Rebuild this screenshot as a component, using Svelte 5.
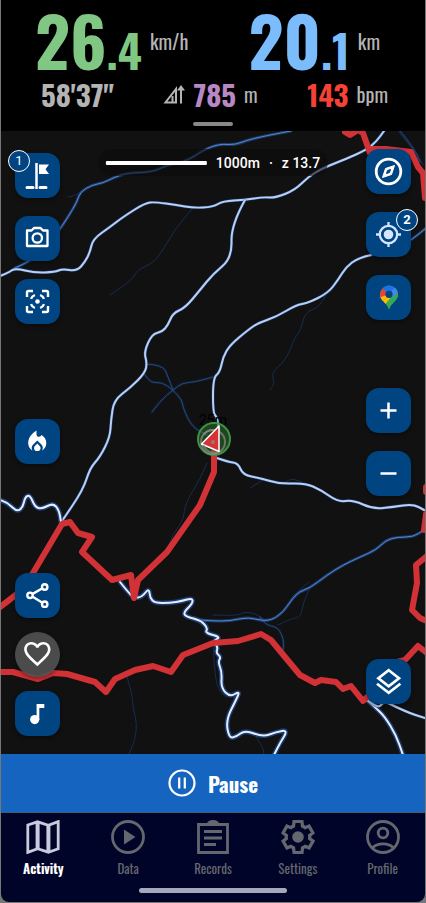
<script lang="ts">
  type River = { kind: string; points: string };

  let activeTab: string = "Activity";
  let paused: boolean = false;
  let liked: boolean = false;

  const tabs = ["Activity", "Data", "Records", "Settings", "Profile"];

  // Heatmap lines, from faint trails to busy roads
  const rivers: River[] = [
    { kind: "faint", points: "193,208 178,225 167,243 155,262 137,270 132,280 110,295" },
    { kind: "faint", points: "326,295 320,307 305,312 301,330 295,337 286,360 271,373 275,383 270,390" },
    { kind: "faint", points: "127,677 132,693 133,708 137,723 135,740 129,754" },
    { kind: "faint", points: "207,463 200,480 185,503 184,520 172,535 167,552" },
    { kind: "faint", points: "278,625 290,619 301,617 303,603 310,588" },
    { kind: "faint", points: "213,615 238,616 243,612 255,613 268,622" },
    { kind: "faint", points: "256,737 263,747 264,755" },
    { kind: "faint", points: "250,488 263,480" },
    { kind: "faint", points: "284,483 290,478 302,482" },
    { kind: "faint", points: "68,197 75,196 80,192" },
    { kind: "faint", points: "398,131 409,145 417,153 423,165" },
    { kind: "faint", points: "213,640 214,668 218,690 226,697" },
    { kind: "faint", points: "294,598 301,588 309,582" },
    { kind: "dim", points: "147,364 163,365 168,377 173,390" },
    { kind: "dim", points: "145,375 150,383 162,382 173,390 182,400 183,408 192,427 207,435" },
    { kind: "dim", points: "152,412 160,401 173,390 182,383 195,382 213,377" },
    { kind: "dim", points: "260,617 265,625 278,627 284,640 283,650" },
    { kind: "dim", points: "400,131 414,148 420,162" },
    { kind: "mid", points: "291,131 253,138 235,145 223,144 213,146 202,151 187,161 167,165 153,172 127,173 115,177 103,183 92,185 80,192 77,202 68,217 60,229 45,250 28,262 15,268" },
    { kind: "mid", points: "200,620 213,621 230,621 248,617 268,622 283,613 296,593 310,588 327,575 343,565 360,557 376,550 386,540 398,537 413,537 424,530" },
    { kind: "mid", points: "426,228 411,241 390,251 371,255" },
    { kind: "bright", points: "0,276 8,273 15,268 35,273 55,272 62,269 77,271 85,262 90,252 93,239 110,227 123,217 145,203 155,202 177,205 193,208 213,207 223,201 245,200 263,197 275,198 295,190 308,177 323,168 346,159 366,150 376,142 384,131" },
    { kind: "bright", points: "245,200 231,225 232,258 213,274 200,290 185,308 173,313 168,325 162,332 152,334 144,352 147,363 145,373 130,388 114,400 111,420 110,437 100,457 90,468 83,490 62,521" },
    { kind: "bright", points: "371,255 358,258 346,267 338,280 328,293 308,303 296,305 276,317 258,323 248,330 230,345 223,357 220,372 213,378 213,413 217,417 219,430" },
    { kind: "bright", points: "214,457 228,462 238,463 243,475 260,478 280,484 305,483 321,490 338,502 353,500 373,509 393,507 413,504 424,510" },
    { kind: "bright", points: "388,703 406,712 425,718" },
    { kind: "busy", points: "0,500 7,502 17,512 23,507 25,497 30,495 35,507 42,509 53,503 59,510 61,522" },
    { kind: "busy", points: "120,582 128,592 134,598 142,597 149,588 150,598 155,603 170,603 182,601 192,598 193,603 183,613 187,617 200,620 208,628 205,633 221,637 213,641 218,647 216,653 221,657 218,662 222,672 221,688 230,697 240,691 236,700 226,720 229,738 236,737 245,730 263,737 276,732 288,730 280,743 274,755" },
    { kind: "busy", points: "366,699 376,708 385,717 396,735 403,755" },
    { kind: "bright", points: "370,702 378,708 383,703" },
  ];

  // Route segments
  const routes: string[] = [
    "214,452 214,472 200,505 167,552 138,580 134,598 131,575 112,580 82,552 92,537 78,533 70,522 62,524 33,573 17,594 0,607",
    "0,672 13,672 38,679 53,673 67,674 95,682 106,692 115,679 135,670 153,666 171,672 183,655 213,643 238,641 261,634 271,640 285,657 300,675 315,683 321,680 336,682 343,689 351,686 363,701 375,690",
    "385,665 405,660 418,646 427,653",
    "427,556 416,565 417,583 412,610 420,618 427,621",
    "426,487 426,492",
    "426,514 424,530",
    "345,132 350,135 358,130 363,133 370,153",
    "372,149 386,149 411,152 418,167 423,173 425,198",
  ];

  // Rounds off the corners of a point list
  function smooth(points: string): string {
    const p = points.split(" ").map((s) => s.split(",").map(Number));
    let d = `M${p[0][0]} ${p[0][1]}`;
    for (let i = 1; i < p.length - 1; i++) {
      const mx = (p[i][0] + p[i + 1][0]) / 2;
      const my = (p[i][1] + p[i + 1][1]) / 2;
      d += `Q${p[i][0]} ${p[i][1]} ${mx} ${my}`;
    }
    const last = p[p.length - 1];
    return d + `L${last[0]} ${last[1]}`;
  }
</script>

<div class="app">
  <header class="stats">
    <div class="row main-row">
      <div class="stat speed">
        <span class="big">26<span class="decimal">.4</span></span>
        <span class="unit">km/h</span>
      </div>
      <div class="stat distance">
        <span class="big">20<span class="decimal">.1</span></span>
        <span class="unit">km</span>
      </div>
    </div>
    <div class="row sub-row">
      <div class="small time">58'37"</div>
      <div class="small climb">
        <svg class="climb-icon" viewBox="0 0 22 20" aria-hidden="true">
          <path d="M2.500 18.500H13V5Z" fill="none" stroke="currentColor" stroke-width="2" />
          <path d="M9.500 12V18M18 19.500V5" fill="none" stroke="currentColor" stroke-width="2" />
          <path d="M14 6.500L18 1L22 6.500Z" fill="currentColor" />
        </svg>
        <span>785</span>
        <span class="unit">m</span>
      </div>
      <div class="small heart-rate">
        <span>143</span>
        <span class="unit">bpm</span>
      </div>
    </div>
    <button type="button" class="handle" aria-label="Expand stats"></button>
  </header>

  <main class="map">
    <svg class="canvas" viewBox="1 131 424 623" preserveAspectRatio="xMidYMid slice" aria-hidden="true">
      {#each rivers as river}
        <path class="glow {river.kind}" d={smooth(river.points)} />
        <path class="line {river.kind}" d={smooth(river.points)} />
      {/each}
      {#each routes as route}
        <polyline class="route" points={route} />
      {/each}
      <!-- current position -->
      <text class="elevation" x="213" y="425">25m</text>
      <circle cx="214" cy="439" r="16" fill="#2c7a2f" fill-opacity="0.5" stroke="#3f9142" stroke-width="2" />
      <circle cx="213" cy="442" r="12" fill="none" stroke="#8b8b84" stroke-opacity="0.7" stroke-width="2" />
      <path d="M201.500 444L219 426V451.500Z" fill="#d83236" stroke="#fff" stroke-width="1.500" />
      <path d="M204 434A12 12 0 0 1 213 430M204 446A12 12 0 0 0 217 453" fill="none" stroke="#8b8b84" stroke-opacity="0.7" stroke-width="2" />
      <circle cx="213" cy="442" r="2" fill="#9a7777" />
    </svg>

    <div class="scale">
      <span class="scale-line"></span>
      <span>1000m</span>
      <span class="dot">·</span>
      <span>z 13.7</span>
    </div>

    <div class="tools left">
      <button type="button" aria-label="Waypoints, 1">
        <svg viewBox="0 0 45 45">
          <path d="M21.500 10V36" stroke="#fff" stroke-width="2.500" />
          <path d="M12 34.500H18M25 34.500H31" stroke="#fff" stroke-width="3" stroke-linecap="round" />
          <path d="M24 11.500H34L30.500 16.200L34 21H24Z" fill="#fff" />
        </svg>
        <span class="badge">1</span>
      </button>
      <button type="button" aria-label="Camera">
        <svg viewBox="0 0 45 45" fill="none" stroke="#fff" stroke-width="2.300" stroke-linejoin="round">
          <path d="M12 14.500H16.500L19 12H25.500L28 14.500H32.500V30H12Z" />
          <circle cx="22.300" cy="22" r="4.700" />
        </svg>
      </button>
      <button type="button" aria-label="Center map">
        <svg viewBox="0 0 45 45" fill="none" stroke="#fff" stroke-width="2.400">
          <path d="M12 18V13.500Q12 12 13.500 12H18M27 12H31.500Q33 12 33 13.500V18M33 27V31.500Q33 33 31.500 33H27M18 33H13.500Q12 33 12 31.500V27" />
          <path d="M19.900 16A7 7 0 0 0 16 19.900M25.100 16A7 7 0 0 1 29 19.900M29 25.100A7 7 0 0 1 25.100 29M19.900 29A7 7 0 0 1 16 25.100" />
          <circle cx="22.500" cy="22.500" r="2.300" fill="#fff" stroke="none" />
        </svg>
      </button>
      <button type="button" class="heat" aria-label="Heatmap">
        <svg viewBox="0 0 45 45">
          <path
            fill="#fff"
            d="M21.500 11.500V15.200C21.500 16.800 22.600 17.800 24 17.800C24.800 17.800 25.500 17.400 26 16.800L26.500 16.100C29.400 17.800 31.300 20.600 31.300 24.100C31.300 27.400 29.600 30.300 26.900 31.700C27.500 30.900 27.800 30 27.800 29C27.800 27.700 27.300 26.500 26.400 25.500L22.300 21.500L18.200 25.500C17.200 26.500 16.700 27.700 16.700 29C16.700 30 17 30.900 17.600 31.700C14.900 30.300 13.200 27.400 13.200 24.100C13.200 18.700 16.600 14.800 21.500 11.500Z"
          />
          <path fill="#fff" d="M22.300 24.600L24.700 27C25.300 27.600 25.600 28.300 25.600 29A3.300 3.100 0 0 1 19 29C19 28.300 19.300 27.600 19.900 27Z" />
        </svg>
      </button>
      <button type="button" class="share" aria-label="Share">
        <svg viewBox="0 0 45 45" fill="none" stroke="#fff" stroke-width="2.400">
          <path d="M17.700 20.900L27 15.500M17.700 23.800L27 29.600" />
          <circle cx="15" cy="22.300" r="2.700" />
          <circle cx="29.700" cy="14" r="2.700" />
          <circle cx="29.700" cy="31.200" r="2.700" />
        </svg>
      </button>
      <button type="button" class="like" aria-label="Like" aria-pressed={liked} on:click={() => (liked = !liked)}>
        <svg viewBox="0 0 45 45">
          <path
            transform="translate(6.500 6) scale(1.320)"
            fill="#fff"
            d="M16.500 3c-1.740 0-3.410.81-4.500 2.090C10.910 3.810 9.240 3 7.500 3 4.420 3 2 5.420 2 8.500c0 3.780 3.400 6.860 8.550 11.540L12 21.350l1.450-1.320C18.600 15.360 22 12.280 22 8.500 22 5.420 19.580 3 16.500 3zm-4.400 15.550l-.1.100-.1-.1C7.140 14.240 4 11.390 4 8.500 4 6.500 5.500 5 7.500 5c1.540 0 3.040.99 3.570 2.360h1.870C13.460 5.990 14.960 5 16.500 5c2 0 3.500 1.500 3.500 3.500 0 2.890-3.140 5.740-7.900 10.050z"
          />
        </svg>
      </button>
      <button type="button" aria-label="Music">
        <svg viewBox="0 0 45 45" fill="#fff">
          <circle cx="19.700" cy="28.600" r="4.600" />
          <path d="M21.600 13H29.300V17H24.300V29H21.600Z" />
        </svg>
      </button>
    </div>

    <div class="tools right">
      <button type="button" aria-label="Compass">
        <svg viewBox="0 0 45 45">
          <circle cx="22.500" cy="22.500" r="12.300" fill="none" stroke="#fff" stroke-width="2.800" />
          <path d="M28.500 16.500L25.500 25.500L16.500 28.500L19.500 19.500Z" fill="#fff" stroke="#fff" stroke-linejoin="round" />
          <path d="M24.500 20.500L23.500 23.500L20.500 24.500L21.500 21.500Z" fill="#004482" stroke="#004482" stroke-linejoin="round" />
        </svg>
      </button>
      <button type="button" aria-label="My location, 2">
        <svg viewBox="0 0 45 45" fill="none" stroke="#d5e4ff" stroke-width="2.300">
          <circle cx="22.500" cy="22.500" r="8.700" />
          <path d="M22.500 10V14M22.500 31V35M10 22.500H14M31 22.500H35" />
          <circle cx="22.500" cy="22.500" r="4.800" fill="#d5e4ff" stroke="none" />
        </svg>
        <span class="badge strong">2</span>
      </button>
      <button type="button" aria-label="Open in maps">
        <svg viewBox="0 0 45 45">
          <clipPath id="pin">
            <path d="M23 10.500A9 9 0 0 1 32 19.500C32 26 25 27.500 23 34.500C21 27.500 14 26 14 19.500A9 9 0 0 1 23 10.500Z" />
          </clipPath>
          <g clip-path="url(#pin)">
            <path d="M10 8H36V38H10Z" fill="#34a853" />
            <path d="M32 14L17 32L10 30V20L23 19Z" fill="#fbbc04" />
            <path d="M33 13L19 30L23 36H36V13Z" fill="#34a853" />
            <path d="M23 19L29.500 11.500L34 15L27 22Z" fill="#4285f4" />
            <path d="M16 13L23 19L17 26L10 21V12Z" fill="#ea4335" />
            <path d="M16 13L23 19L30 11L23 8Z" fill="#1a73e8" />
            <path d="M17 26L23 19L10 24V28Z" fill="#fbbc04" />
          </g>
          <circle cx="23" cy="19.300" r="3.600" fill="#004482" />
        </svg>
      </button>
      <button type="button" class="zoom-in" aria-label="Zoom in">
        <svg viewBox="0 0 45 45"><path d="M22.500 14.500V30.500M14.500 22.500H30.500" stroke="#fff" stroke-width="2.500" /></svg>
      </button>
      <button type="button" aria-label="Zoom out">
        <svg viewBox="0 0 45 45"><path d="M14.500 22.500H30.500" stroke="#fff" stroke-width="2.500" /></svg>
      </button>
      <button type="button" class="layers" aria-label="Layers">
        <svg viewBox="0 0 45 45" fill="none" stroke="#fff" stroke-width="2.700">
          <path d="M22.700 11.300L33 19.300L22.700 27.300L12.400 19.300Z" />
          <path d="M11 24.700L22.700 33.700L34.400 24.700" />
        </svg>
      </button>
    </div>
  </main>

  <button type="button" class="pause" aria-pressed={paused} on:click={() => (paused = !paused)}>
    <svg viewBox="0 0 28 28" fill="none" stroke="#fff" aria-hidden="true">
      <circle cx="14" cy="14" r="12.500" stroke-width="2.200" />
      <path d="M11.200 8.500V19.500M16.800 8.500V19.500" stroke-width="2.200" />
    </svg>
    <span>Pause</span>
  </button>

  <nav>
    <div class="tabs">
      {#each tabs as tab}
        <button type="button" class="tab" class:active={activeTab === tab} on:click={() => (activeTab = tab)}>
          <svg viewBox="0 0 34 34" fill="none" stroke="currentColor" stroke-width="2.800" aria-hidden="true">
            {#if tab === "Activity"}
              <path d="M1.800 5L11.600 1.800L22.400 5.300L32.200 1.600V28.800L22.400 32.200L11.600 28.700L1.800 32.400Z" />
              <path d="M11.600 2V29M22.400 5V32" stroke-width="4" />
            {:else if tab === "Data"}
              <circle cx="17" cy="17" r="15.500" />
              <path d="M13 9.500V24.500L24.500 17Z" fill="currentColor" stroke="none" />
            {:else if tab === "Records"}
              <path d="M2.500 4.500H31.500V32.500H2.500Z" />
              <path d="M12 4.500Q13 1.500 17 1.500T22 4.500" />
              <path d="M8 11.500H26M8 18H26M8 24.500H20" />
            {:else if tab === "Settings"}
              <g transform="translate(-2.600 -2.600) scale(1.633)">
                <path
                  stroke-width="2"
                  d="M19.140 12.940c.04-.3.06-.61.06-.94 0-.32-.02-.64-.07-.94l2.030-1.580-2.390-4.150-2.390.96c-.5-.38-1.030-.7-1.620-.94L14.400 2.400H9.600l-.36 2.950c-.59.24-1.130.57-1.620.94l-2.390-.96-2.370 4.150 2.030 1.580c-.05.3-.09.63-.09.94s.02.64.07.94l-2.010 1.580 2.390 4.150 2.390-.96c.5.38 1.030.7 1.620.94l.36 2.950h4.800l.36-2.950c.59-.24 1.130-.56 1.620-.94l2.390.96 2.390-4.150z"
                />
              </g>
              <circle cx="17" cy="17" r="5.800" fill="currentColor" stroke="none" />
            {:else}
              <circle cx="17" cy="17" r="15.500" />
              <circle cx="17" cy="13" r="4.800" />
              <path d="M6.500 28C11 22.500 23 22.500 27.500 28" />
            {/if}
          </svg>
          <span>{tab}</span>
        </button>
      {/each}
    </div>
    <div class="home-bar"></div>
  </nav>
</div>

<style>
  :global(body) {
    margin: 0;
    background: #777;
  }

  .app {
    display: flex;
    flex-direction: column;
    box-sizing: border-box;
    min-height: 100vh;
    padding: 0 1px 1px;
    font-family: "Oswald", "Liberation Sans Narrow", "Roboto Condensed", "Liberation Sans", sans-serif;
  }

  button {
    border: 0;
    padding: 0;
    font-family: inherit;
    cursor: pointer;
  }

  .stats {
    display: flex;
    flex-direction: column;
    box-sizing: border-box;
    height: 131px;
    padding-top: 8px;
    background: #000;
  }

  .row {
    display: flex;
    justify-content: space-between;
  }

  .main-row {
    height: 68px;
    padding: 0 45px 0 34px;
  }

  .sub-row {
    height: 38px;
    padding: 0 37px 0 40px;
  }

  .stat {
    display: flex;
    gap: 8px;
  }

  .big {
    font-size: 68px;
    font-weight: bold;
    line-height: 64px;
  }

  .decimal {
    font-size: 46px;
  }

  .speed .big {
    color: #81c784;
  }

  .distance .big {
    color: #7abcfc;
  }

  .unit {
    color: #b4b4b4;
    font-size: 20px;
    font-weight: normal;
  }

  .stat .unit {
    line-height: 26px;
    margin-top: 20px;
  }

  .small {
    display: flex;
    align-items: center;
    gap: 8px;
    height: 36px;
    font-size: 29px;
    font-weight: bold;
    line-height: 36px;
  }

  .time {
    color: #b4b4b4;
  }

  .climb {
    color: #b987c5;
  }

  .climb-icon {
    width: 22px;
    height: 20px;
    color: #b4b4b4;
  }

  .heart-rate {
    color: #f44336;
  }

  .handle {
    align-self: center;
    width: 40px;
    height: 4px;
    margin-top: 8px;
    border-radius: 2px;
    background: #888;
  }

  .map {
    position: relative;
    display: flex;
    flex: 1;
    justify-content: space-between;
    min-height: 623px;
    overflow: hidden;
    background: #111;
  }

  .canvas {
    position: absolute;
    inset: 0;
    width: 100%;
    height: 100%;
  }

  .canvas path,
  .canvas polyline {
    stroke-linejoin: round;
    stroke-linecap: round;
  }

  .glow,
  .line {
    fill: none;
  }

  .glow {
    stroke: #2458a8;
    stroke-width: 3;
    stroke-opacity: 0.6;
  }

  .glow.faint {
    stroke-opacity: 0;
  }

  .glow.dim {
    stroke-opacity: 0.15;
  }

  .glow.busy {
    stroke-width: 5;
  }

  .line.faint {
    stroke: #172c50;
    stroke-width: 1;
  }

  .line.dim {
    stroke: #214a85;
    stroke-width: 1;
  }

  .line.mid {
    stroke: #5686cc;
    stroke-width: 1;
  }

  .line.bright {
    stroke: #b9cff5;
    stroke-width: 2;
  }

  .line.busy {
    stroke: #e4edff;
    stroke-width: 2;
  }

  .route {
    fill: none;
    stroke: #d23236;
    stroke-width: 6;
  }

  .elevation {
    fill: #000;
    font-family: Roboto, sans-serif;
    font-size: 14px;
    text-anchor: middle;
  }

  .scale {
    position: absolute;
    top: 18px;
    left: 50%;
    display: flex;
    align-items: center;
    gap: 9px;
    box-sizing: border-box;
    height: 27px;
    padding: 0 8px;
    border-radius: 14px;
    background: rgba(12, 12, 12, 0.6);
    color: #fff;
    font-family: Roboto, sans-serif;
    font-size: 14px;
    font-weight: 500;
    white-space: nowrap;
    transform: translateX(-50%);
  }

  .scale-line {
    width: 101px;
    height: 4px;
    border-radius: 1px;
    background: #fff;
  }

  .tools {
    position: relative;
    display: flex;
    flex-direction: column;
    gap: 18px;
  }

  .left {
    padding: 22px 0 18px 14px;
  }

  .right {
    padding: 18px 14px 50px 0;
  }

  .tools button {
    position: relative;
    width: 45px;
    height: 45px;
    border-radius: 13px;
    background: #004482;
    box-shadow: 0 2px 4px rgba(0, 0, 0, 0.4);
  }

  .tools button svg {
    display: block;
    width: 45px;
    height: 45px;
  }

  .tools .heat {
    margin-top: 77px;
  }

  .tools .zoom-in {
    margin-top: 50px;
  }

  .tools .share,
  .tools .layers {
    margin-top: auto;
  }

  .tools .like {
    margin: -4px 0;
    border-radius: 50%;
    background: rgba(80, 80, 80, 0.92);
  }

  .badge {
    position: absolute;
    top: -3px;
    left: -7px;
    box-sizing: border-box;
    width: 22px;
    height: 22px;
    border: 1px solid #fff;
    border-radius: 50%;
    background: #004482;
    color: #fff;
    font-family: Roboto, sans-serif;
    font-size: 13px;
    line-height: 20px;
    text-align: center;
  }

  .badge.strong {
    right: -7px;
    left: auto;
    font-weight: bold;
  }

  .pause {
    display: flex;
    align-items: center;
    justify-content: center;
    gap: 12px;
    height: 58px;
    background: #1565c0;
    color: #fff;
    font-size: 21px;
    font-weight: bold;
  }

  .pause svg {
    width: 28px;
    height: 28px;
  }

  nav {
    display: flex;
    flex-direction: column;
    align-items: center;
    box-sizing: border-box;
    height: 90px;
    padding-top: 7px;
    border-top: 1px solid #4a5a70;
    border-radius: 0 0 8px 8px;
    background: #000428;
  }

  .tabs {
    display: flex;
    width: 100%;
  }

  .tab {
    display: flex;
    flex: 1;
    flex-direction: column;
    align-items: center;
    gap: 5px;
    background: none;
    color: #65676e;
    font-size: 13px;
    line-height: 18px;
  }

  .tab svg {
    width: 34px;
    height: 34px;
  }

  .tab.active {
    color: #c9cbdc;
    font-weight: bold;
  }

  .tab.active span {
    color: #fff;
  }

  .home-bar {
    width: 148px;
    height: 5px;
    margin-top: 11px;
    border-radius: 3px;
    background: #a6a8bc;
  }
</style>
